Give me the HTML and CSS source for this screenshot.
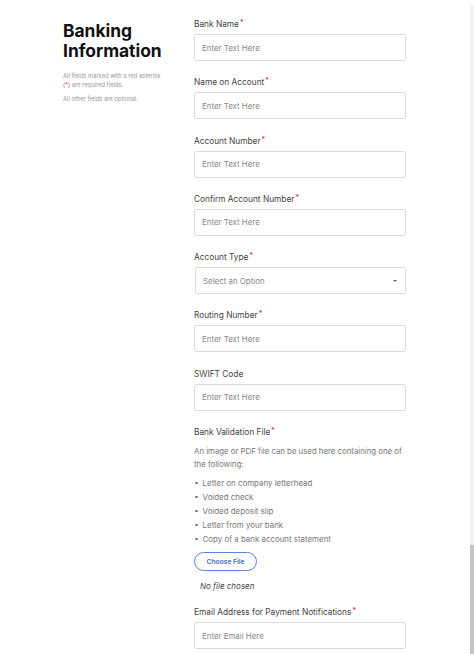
FILE: index.html
```html
<!DOCTYPE html>
<html>
<head>
<meta charset="utf-8">
<link rel="stylesheet" href="styles.css">
</head>
<body>
<div class="page">
  <aside class="intro">
    <h1 class="title">Banking<br>Information</h1>
    <p class="note">All fields marked with a red asterisk <span class="req">(*)</span> are required fields.</p>
    <p class="note">All other fields are optional.</p>
  </aside>
  <main class="form">
    <div class="field">
      <label class="label">Bank Name<span class="star">*</span></label>
      <div class="input">Enter Text Here</div>
    </div>
    <div class="field">
      <label class="label">Name on Account<span class="star">*</span></label>
      <div class="input">Enter Text Here</div>
    </div>
    <div class="field">
      <label class="label">Account Number<span class="star">*</span></label>
      <div class="input">Enter Text Here</div>
    </div>
    <div class="field">
      <label class="label">Confirm Account Number<span class="star">*</span></label>
      <div class="input">Enter Text Here</div>
    </div>
    <div class="field">
      <label class="label">Account Type<span class="star">*</span></label>
      <div class="input select"><span>Select an Option</span><span class="caret"></span></div>
    </div>
    <div class="field">
      <label class="label">Routing Number<span class="star">*</span></label>
      <div class="input">Enter Text Here</div>
    </div>
    <div class="field">
      <label class="label">SWIFT Code</label>
      <div class="input">Enter Text Here</div>
    </div>
    <div class="field file-field">
      <label class="label">Bank Validation File<span class="star">*</span></label>
      <p class="desc">An image or PDF file can be used here containing one of the following:</p>
      <ul class="list">
        <li>Letter on company letterhead</li>
        <li>Voided check</li>
        <li>Voided deposit slip</li>
        <li>Letter from your bank</li>
        <li>Copy of a bank account statement</li>
      </ul>
      <div class="choose">Choose File</div>
      <p class="nofile">No file chosen</p>
    </div>
    <div class="field">
      <label class="label">Email Address for Payment Notifications<span class="star">*</span></label>
      <div class="input">Enter Email Here</div>
    </div>
  </main>
</div>
<div class="scrollbar"><div class="thumb"></div></div>
</body>
</html>
```

FILE: styles.css
```css
html, body {
  margin: 0;
  padding: 0;
  background: #fff;
  overflow: hidden;
}
body {
  font-family: Inter, "Noto Sans", sans-serif;
  color: #333;
}
.page {
  display: flex;
  padding: 18px 0 0 63px;
}
.intro {
  width: 131px;
  flex: none;
}
.title {
  margin: 3px 0 0;
  font-size: 17.4px;
  line-height: 20px;
  font-weight: 700;
  color: #111;
}
.note {
  margin: 10px 0 0;
  font-size: 5.8px;
  line-height: 9px;
  color: #999;
  width: 106px;
}
.note + .note {
  margin-top: 5px;
}
.req {
  color: #c0485a;
}
.form {
  width: 212px;
  flex: none;
}
.field {
  margin-bottom: 15.3px;
}
.label {
  display: block;
  font-size: 8.3px;
  line-height: 12px;
  height: 12px;
  color: #444;
  margin-bottom: 4px;
}
.star {
  color: #c8243c;
  font-size: 7px;
  line-height: 0;
  vertical-align: 2px;
  margin-left: 1px;
}
.input {
  box-sizing: border-box;
  height: 27px;
  border: 1px solid #ddd;
  border-radius: 2px;
  padding: 0 7px;
  display: flex;
  align-items: center;
  font-size: 7.9px;
  color: #888;
}
.select {
  justify-content: space-between;
  margin-left: 1px;
}
.caret {
  width: 0;
  height: 0;
  border-left: 2.5px solid transparent;
  border-right: 2.5px solid transparent;
  border-top: 2.5px solid #666;
  margin-right: 1px;
}
.desc {
  margin: 7px 0 0;
  font-size: 7.8px;
  line-height: 13px;
  color: #777;
}
.list {
  margin: 5px 0 0;
  padding: 0;
  list-style: none;
  font-size: 7.9px;
  line-height: 14px;
  color: #777;
}
.list li::before {
  content: "";
  display: inline-block;
  width: 2.6px;
  height: 2.6px;
  border-radius: 50%;
  background: #777;
  margin: 0 5px 1.5px 1px;
  vertical-align: middle;
}
.choose {
  margin-top: 6px;
  box-sizing: border-box;
  width: 63px;
  height: 19px;
  border: 1px solid #5b86d6;
  border-radius: 10px;
  display: flex;
  align-items: center;
  justify-content: center;
  font-size: 6.7px;
  font-weight: 600;
  color: #3f6fc4;
}
.nofile {
  margin: 9px 0 0 6px;
  font-size: 8px;
  line-height: 12px;
  font-style: italic;
  color: #444;
}
.file-field {
  margin-bottom: 14px;
}
.scrollbar {
  position: fixed;
  top: 5px;
  right: 0;
  bottom: 0;
  width: 4px;
  background: #f2f2f2;
}
.thumb {
  position: absolute;
  left: 0;
  right: 0;
  top: 540px;
  bottom: 0;
  background: #c4c4c4;
}
```
